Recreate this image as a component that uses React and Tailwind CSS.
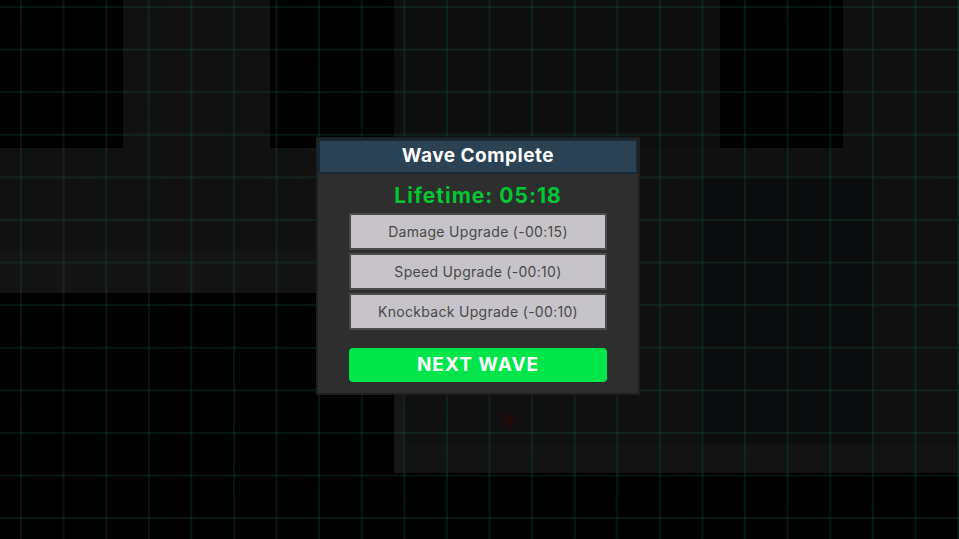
import React from "react";

const upgrades = [
  { label: "Damage Upgrade", cost: "-00:15" },
  { label: "Speed Upgrade", cost: "-00:10" },
  { label: "Knockback Upgrade", cost: "-00:10" },
];

// level blocks behind the overlay, laid on the play field
const blocks = [
  { cls: "left-0 top-0 w-[123px] h-[148px] bg-black" },
  { cls: "left-[123px] top-0 w-[147px] h-[148px] bg-[#111111]" },
  { cls: "left-[270px] top-0 w-[124px] h-[148px] bg-black" },
  { cls: "left-[394px] top-0 w-[326px] h-[148px] bg-[#0e0e0e]" },
  { cls: "left-[720px] top-0 w-[123px] h-[148px] bg-black" },
  { cls: "left-[843px] top-0 w-[116px] h-[148px] bg-[#101010]" },
  { cls: "left-0 top-[148px] w-[394px] h-[145px] bg-[#111111]" },
  { cls: "left-0 top-[250px] w-[394px] h-[43px] bg-[#141414]" },
  { cls: "left-[394px] top-[148px] w-[565px] h-[325px] bg-[#101010]" },
  { cls: "left-[394px] top-[280px] w-[10px] h-[193px] bg-[#161616]" },
  { cls: "left-[700px] top-[177px] w-[173px] h-[266px] bg-[#0b0c0d]" },
  { cls: "left-[404px] top-[445px] w-[555px] h-[28px] bg-[#131313]" },
];

export default function App() {
  return (
    <div className="relative w-[959px] h-[539px] overflow-hidden bg-black font-['Inter','DejaVu_Sans',sans-serif]">
      {blocks.map((b, i) => (
        <div key={i} className={`absolute ${b.cls}`} />
      ))}

      {/* red splat on the floor */}
      <div className="absolute left-[502px] top-[414px] w-[12px] h-[12px] rounded-full bg-[#250a0c] blur-[2px]" />

      {/* grid overlay */}
      <div className="absolute inset-0 pointer-events-none bg-[linear-gradient(to_right,rgba(20,90,50,0.27)_2px,transparent_2px),linear-gradient(to_bottom,rgba(20,90,50,0.27)_2px,transparent_2px)] bg-[size:42.6px_42.6px] bg-[position:20px_6px]" />

      {/* wave complete dialog */}
      <div className="absolute left-[316px] top-[137px] w-[324px] border-2 border-[#1d1f20] bg-[#2e2e2e]">
        <div className="h-[35px] flex items-center justify-center bg-[#2a4253] border-2 border-[#1a2833]">
          <span className="text-white text-[19px] font-bold tracking-[0.5px]">Wave Complete</span>
        </div>
        <div className="flex flex-col items-center pt-[8px] pb-[11px]">
          <div className="text-[#00c832] text-[21px] font-bold tracking-[1px] leading-[28px]">
            Lifetime: 05:18
          </div>
          <div className="mt-[3px] flex flex-col gap-[3px] w-[258px]">
            {upgrades.map((u) => (
              <button
                key={u.label}
                className="h-[37px] w-full border-2 border-[#4a4a4a] bg-[#c6c4c8] text-[#484848] text-[14px] tracking-[0.3px]"
              >
                {u.label} ({u.cost})
              </button>
            ))}
          </div>
          <button className="mt-[18px] h-[34px] w-[258px] rounded-[4px] bg-[#00e64a] text-white text-[19px] font-bold tracking-[1px]">
            NEXT WAVE
          </button>
        </div>
      </div>
    </div>
  );
}
